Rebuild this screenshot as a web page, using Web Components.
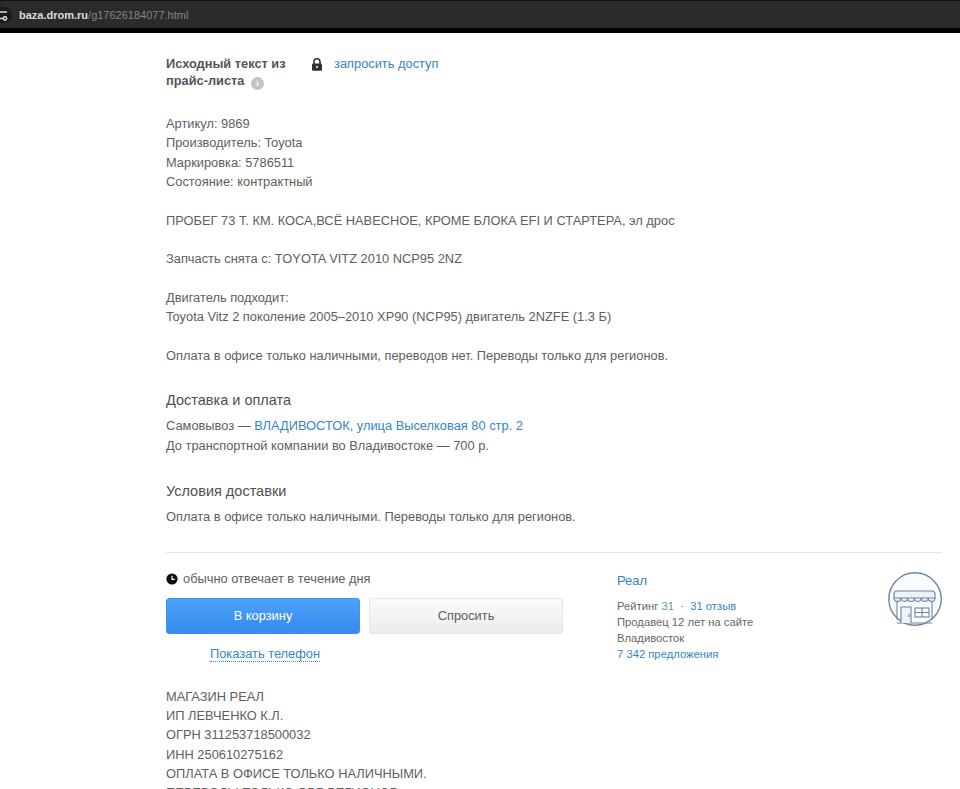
<!DOCTYPE html>
<html lang="ru">
<head>
<meta charset="utf-8">
<title>baza.drom.ru</title>
<style>
  html, body { margin: 0; padding: 0; height: 789px; overflow: hidden; background: #fff; }
  body { font-family: "Liberation Sans", Arial, sans-serif; color: #5e5e5e; }
</style>
</head>
<body>
<url-bar host="baza.drom.ru" path="/g17626184077.html"></url-bar>
<a-page>
  <source-head></source-head>
  <text-block style="margin-top:24px">Артикул: 9869<br>Производитель: Toyota<br>Маркировка: 5786511<br>Состояние: контрактный<br><br>ПРОБЕГ 73 Т. КМ. КОСА,ВСЁ НАВЕСНОЕ, КРОМЕ БЛОКА EFI И СТАРТЕРА, эл дрос<br><br>Запчасть снята с: TOYOTA VITZ 2010 NCP95 2NZ<br><br>Двигатель подходит:<br>Toyota Vitz 2 поколение 2005–2010 XP90 (NCP95) двигатель 2NZFE (1.3 Б)<br><br>Оплата в офисе только наличными, переводов нет. Переводы только для регионов.</text-block>
  <info-section title="Доставка и оплата" style="margin-top:25px">Самовывоз — <a-link>ВЛАДИВОСТОК, улица Выселковая 80 стр. 2</a-link><br>До транспортной компании во Владивостоке — 700 р.</info-section>
  <info-section title="Условия доставки" style="margin-top:26px">Оплата в офисе только наличными. Переводы только для регионов.</info-section>
  <seller-panel></seller-panel>
  <text-block style="margin-top:23px">МАГАЗИН РЕАЛ<br>ИП ЛЕВЧЕНКО К.Л.<br>ОГРН 311253718500032<br>ИНН 250610275162<br>ОПЛАТА В ОФИСЕ ТОЛЬКО НАЛИЧНЫМИ.<br>ПЕРЕВОДЫ ТОЛЬКО ДЛЯ РЕГИОНОВ.</text-block>
</a-page>
<script>
function define(name, html, attrs) {
  customElements.define(name, class extends HTMLElement {
    connectedCallback() {
      if (this.shadowRoot) return;
      let out = html;
      for (const a of attrs || []) out = out.split(`{{${a}}}`).join(this.getAttribute(a) || "");
      this.attachShadow({ mode: "open" }).innerHTML = out;
    }
  });
}

define("a-page", `<style>:host{display:block;padding:0 18px 0 166px;font-size:12.85px;line-height:19.35px}</style><slot></slot>`);

define("a-link", `<style>:host{display:inline;color:#3585c4}</style><slot></slot>`);

define("url-bar", `<style>
  :host{display:flex;align-items:center;height:28px;box-sizing:border-box;background:#2b2b2b;border-top:1px solid #111;font-size:11px;font-weight:700;color:#dcdcdc;box-shadow:0 5px 0 #000}
  .tune{width:19px;height:26px;flex:none}
  .path{color:#858585;font-weight:400}
</style>
<svg class="tune" viewBox="0 0 19 26" fill="none" stroke="#e0e0e0" stroke-width="1.4">
  <rect x="-12" y="5" width="24" height="16" rx="8" fill="#1b1b1b" stroke="none"/>
  <path d="M0 10H7M0 16.5H3"/><circle cx="5" cy="16.5" r="1.7"/>
</svg>
<span class="url">{{host}}<span class="path">{{path}}</span></span>`, ["host", "path"]);

define("source-head", `<style>
  :host{display:flex;padding-top:27px;line-height:17px}
  .label{width:146px;font-weight:700;font-size:12.8px;color:#555}
  .info{display:inline-block;width:13px;height:13px;border-radius:50%;background:#c4c4c4;color:#fff;font:700 9px/13px "Liberation Serif",serif;text-align:center;vertical-align:-1px;margin-left:3px}
  .access{display:flex;align-items:flex-start;gap:12px;color:#3585c4}
  svg{width:10px;height:13px;margin-top:3px}
</style>
<div class="label">Исходный текст из<br>прайс-листа <span class="info">i</span></div>
<div class="access">
  <svg viewBox="0 0 10 13"><path d="M2 6V3.8a3 3 0 0 1 6 0V6" fill="none" stroke="#333" stroke-width="1.6"/><rect x="0" y="5.4" width="10" height="7.4" rx="1.2" fill="#333"/><circle cx="5" cy="9" r="1" fill="#fff"/></svg>
  <span>запросить доступ</span>
</div>`);

define("text-block", `<style>:host{display:block}</style><slot></slot>`);

define("info-section", `<style>
  :host{display:block}
  h3{margin:0 0 6px;font-size:14.5px;font-weight:400;line-height:20px;color:#505050}
</style><h3>{{title}}</h3><slot></slot>`, ["title"]);

define("seller-panel", `<style>
  :host{display:flex;margin-top:25px;padding-top:17px;border-top:1px solid #e4e4e4;height:112px;box-sizing:border-box}
  .left{width:397px;flex:none;margin-right:54px}
  .reply{display:flex;align-items:center;gap:5px;line-height:18px}
  .clock{width:12px;height:12px;flex:none}
  .buttons{display:flex;gap:9px;margin-top:10px}
  button{flex:1;height:36px;border-radius:3px;font:12.85px "Liberation Sans",sans-serif;padding:0}
  .buy{background:linear-gradient(#4ba3f8,#3689ee);border:1px solid #3f93ea;color:#fff}
  .ask{background:linear-gradient(#fbfbfb,#ececec);border:1px solid #e6e6e6;color:#5e5e5e}
  .phone{display:block;width:max-content;margin:12px auto 0 44px;color:#3585c4;border-bottom:1px dotted #3585c4;line-height:15px}
  .right{flex:1;font-size:11.25px;line-height:16px;position:relative;color:#666}
  .name{font-size:13px;color:#3585c4;margin:1px 0 8px;line-height:19px}
  .blue{color:#3585c4}.green{color:#5aa85a}
  .ava{position:absolute;right:0;top:2px;width:54px;height:54px}
</style>
<div class="left">
  <div class="reply"><svg class="clock" viewBox="0 0 12 12"><circle cx="6" cy="6" r="5.6" fill="#111"/><path d="M6 2.8V6.4H8.8" fill="none" stroke="#fff" stroke-width="1.2"/></svg>обычно отвечает в течение дня</div>
  <div class="buttons"><button class="buy">В корзину</button><button class="ask">Спросить</button></div>
  <span class="phone">Показать телефон</span>
</div>
<div class="right">
  <div class="name">Реал</div>
  <div>Рейтинг <span class="green">31</span> &nbsp;·&nbsp; <span class="blue">31 отзыв</span></div>
  <div>Продавец 12 лет на сайте</div>
  <div>Владивосток</div>
  <div class="blue">7 342 предложения</div>
  <svg class="ava" viewBox="0 0 54 54" fill="none" stroke="#6d84a3" stroke-width="1.1">
    <circle cx="27" cy="27" r="26.2" fill="#fbfcfe" stroke-width="1.4"/>
    <path d="M9 26V47.5M44 26V47.5M9 51H44" />
    <path d="M6 26V22a3 3 0 0 1 3-3H44a3 3 0 0 1 3 3V26" fill="#eef3f9"/>
    <path d="M6 26a3.4 3.4 0 0 0 6.8 0a3.4 3.4 0 0 0 6.8 0a3.4 3.4 0 0 0 6.9 0a3.4 3.4 0 0 0 6.9 0a3.4 3.4 0 0 0 6.8 0a3.4 3.4 0 0 0 6.8 0z" fill="#eef3f9"/>
    <path d="M13 51V35H23V51" fill="#eef3f9"/><path d="M21 42V45"/>
    <rect x="27" y="36" width="14" height="9"/><path d="M34 36V45M27 40.5H41"/>
  </svg>
</div>`);
</script>
</body>
</html>
